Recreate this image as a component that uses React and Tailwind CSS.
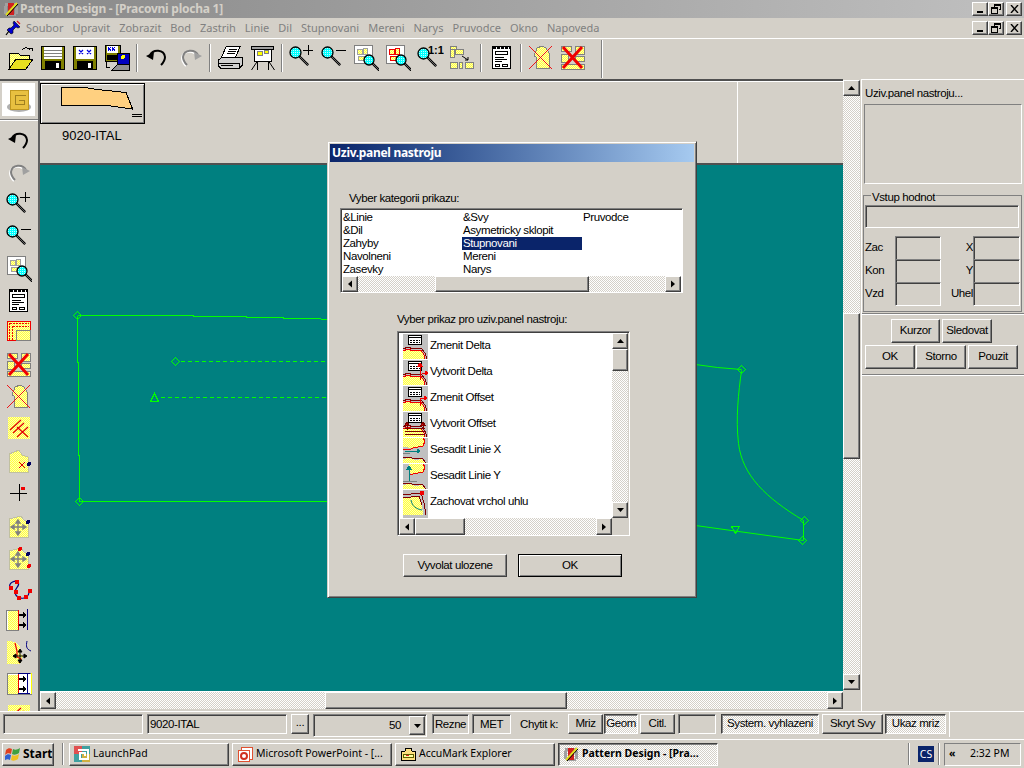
import React from 'react';

const raised = 'border border-t-white border-l-white border-r-[#404040] border-b-[#404040] shadow-[inset_-1px_-1px_0_#808080] bg-[#d4d0c8]';
const sunken = 'border border-t-[#808080] border-l-[#808080] border-r-white border-b-white shadow-[inset_1px_1px_0_#404040]';
const pressed = 'border border-t-[#404040] border-l-[#404040] border-r-white border-b-white shadow-[inset_1px_1px_0_#808080] bg-[repeating-conic-gradient(#d4d0c8_0_25%,#ffffff_0_50%)] bg-[length:2px_2px]';
const track = 'bg-[repeating-conic-gradient(#d4d0c8_0_25%,#ffffff_0_50%)] bg-[length:2px_2px]';
const tahoma = "font-['Noto_Sans',sans-serif]";
const small = 'text-[11.5px] tracking-[-0.4px]';

const MENU = ['Soubor', 'Upravit', 'Zobrazit', 'Bod', 'Zastrih', 'Linie', 'Dil', 'Stupnovani', 'Mereni', 'Narys', 'Pruvodce', 'Okno', 'Napoveda'];

const Svg = ({ children, w = 26, h = 26 }) => (
  <svg width={w} height={h} viewBox="0 0 26 26" shapeRendering="crispEdges">{children}</svg>
);

// dither: pale yellow checker, kept as a 4x4 tile so it survives rasterising
const Patterns = () => (
  <svg width="0" height="0" className="absolute">
    <defs>
      <pattern id="yd" width="4" height="4" patternUnits="userSpaceOnUse">
        <rect width="4" height="4" fill="#ffffb0" shapeRendering="crispEdges" />
        <path d="M0 0h1v1H0zM2 0h1v1H2zM1 1h1v1H1zM3 1h1v1H3zM0 2h1v1H0zM2 2h1v1H2zM1 3h1v1H1zM3 3h1v1H3z" fill="#ffff40" shapeRendering="crispEdges" />
      </pattern>
      <pattern id="cd" width="2" height="2" patternUnits="userSpaceOnUse">
        <rect width="2" height="2" fill="#00ffff" />
        <rect width="1" height="1" fill="#c0ffff" />
      </pattern>
    </defs>
  </svg>
);

const Folder = () => (
  <Svg>
    <path d="M1 8h9l2 2h9v4H8L1 24z" fill="url(#yd)" stroke="#000" />
    <path d="M1 24l7-10h17l-7 10z" fill="#e8e020" stroke="#000" />
    <path d="M14 5c3-3 6-3 8 0" fill="none" stroke="#000" />
    <path d="M20 3h4v3" fill="none" stroke="#000" />
  </Svg>
);

const Disk = ({ marks }) => (
  <svg width="24" height="24" viewBox="0 0 24 24" shapeRendering="crispEdges">
    <rect x="0.5" y="0.5" width="23" height="23" fill="#808000" stroke="#000" />
    <rect x="3" y="1" width="18" height="12" fill="#fff" />
    {marks ? (
      <path d="M6 4l4 4m0-4l-4 4M14 4l4 4m0-4l-4 4" stroke="#0000e0" fill="none" strokeWidth="1.2" shapeRendering="auto" />
    ) : (
      <path d="M3 4h18M3 7h18M3 10h18" stroke="#808080" />
    )}
    <rect x="4" y="15" width="16" height="8" fill="#000" />
    <rect x="15" y="17" width="3" height="5" fill="#fff" />
  </svg>
);

const SaveAll = () => (
  <Svg>
    <rect x="1" y="0" width="15" height="16" fill="#808000" stroke="#000" />
    <rect x="3" y="1" width="11" height="7" fill="#fff" />
    <path d="M4 2l3 4m0-4l-3 4M8 2l3 4m0-4l-3 4" stroke="#0000e0" />
    <rect x="3" y="10" width="11" height="5" fill="#000" />
    <rect x="13" y="8" width="12" height="17" fill="#0000c0" stroke="#000" />
    <circle cx="19" cy="12" r="2" fill="#ffff00" />
    <path d="M8 25l6-6h11v6z" fill="#909090" stroke="#000" />
    <path d="M2 17v5h4" fill="none" stroke="#000" />
  </Svg>
);

const Undo = ({ flip, gray }) => (
  <svg width="24" height="24" viewBox="0 0 24 24" className={flip ? '-scale-x-100' : ''}>
    {gray && <path d="M6 10C9 4 20 4 21 12c0 4-2 6-4 8" fill="none" stroke="#fff" strokeWidth="2" />}
    <path d="M5 9C8 3 19 3 20 11c0 4-2 6-4 8" fill="none" stroke={gray ? '#808080' : '#000'} strokeWidth="2" />
    <path d="M1 10l8-4-1 8z" fill={gray ? '#a0a0a0' : '#000'} />
  </svg>
);

const Printer = () => (
  <Svg w={27}>
    <path d="M9 1h14l-5 11H4z" fill="#fff" stroke="#000" />
    <path d="M11 4h8M10 6h8M9 8h8" stroke="#000" />
    <path d="M1 15l4-3h20v8l-3 3H3l-2-2z" fill="#d0d0d0" stroke="#000" />
    <path d="M1 18h21v5" fill="none" stroke="#000" />
    <rect x="3" y="20" width="12" height="1" fill="#000" />
  </Svg>
);

const Plotter = () => (
  <Svg w={27}>
    <rect x="2" y="1" width="22" height="3" fill="#a0a0a0" stroke="#000" />
    <rect x="5" y="4" width="17" height="12" fill="#fff" stroke="#000" />
    <rect x="8" y="6" width="5" height="4" fill="#ffff00" stroke="#808080" />
    <rect x="15" y="5" width="4" height="3" fill="#ffff00" stroke="#808080" />
    <path d="M8 16L2 25M19 16l6 9M8 16v9M19 16v9" stroke="#000" fill="none" shapeRendering="auto" />
  </Svg>
);

const Lens = ({ x = 0, y = 0, r = 5.5 }) => (
  <g transform={`translate(${x} ${y})`} shapeRendering="auto">
    <path d={`M${r + 1} ${r + 1}l${r * 2.3} ${r * 2.3}`} stroke="#000" strokeWidth="2.4" />
    <path d={`M${r + 1} ${r + 1}l${r * 2.3} ${r * 2.3}`} stroke="#808080" strokeWidth="0.8" />
    <circle cx={r + 1} cy={r + 1} r={r} fill="url(#cd)" stroke="#000" strokeWidth="1.3" />
  </g>
);

const Zoom = ({ minus }) => (
  <Svg>
    <Lens x={0} y={1} />
    <path d={minus ? 'M15 5h10' : 'M14 5h10M19 0v10'} stroke="#000" />
  </Svg>
);

const ZoomFit = ({ red }) => (
  <Svg>
    <rect x="1" y="0" width="18" height="18" fill="#fff" stroke="#808080" />
    <path d="M4 4h5v5H4zM10 3h4v6h-4zM5 11h6v4H5z" fill="url(#yd)" stroke={red ? '#f00000' : '#a0a0a0'} />
    <Lens x={10} y={9} r={5} />
  </Svg>
);

const Zoom11 = () => (
  <Svg w={28}>
    <Lens x={0} y={2} />
    <text x="11" y="9" fontSize="11" fontWeight="700" fontFamily="Liberation Sans, sans-serif">1:1</text>
  </Svg>
);

const Arrange = () => (
  <Svg>
    <path d="M1 1h6v3H1zM1 4h4v8H1zM6 4h8v5H6z" fill="url(#yd)" stroke="#808080" />
    <rect x="1" y="17" width="7" height="6" fill="url(#yd)" stroke="#808080" />
    <rect x="10" y="17" width="3" height="6" fill="url(#yd)" stroke="#808080" />
    <rect x="16" y="17" width="8" height="6" fill="url(#yd)" stroke="#808080" />
    <path d="M13 11l6 4m0-3v3h-3" stroke="#000" fill="none" shapeRendering="auto" />
  </Svg>
);

const Page = () => (
  <svg width="20" height="24" viewBox="0 0 20 24" shapeRendering="crispEdges">
    <rect x="0.5" y="0.5" width="18" height="22" fill="#fff" stroke="#000" strokeWidth="1" />
    <path d="M1 2h17" stroke="#000" strokeWidth="2" strokeDasharray="3 1" />
    <rect x="3.5" y="5.5" width="12" height="3" fill="#fff" stroke="#000" />
    <path d="M3 11h9M3 13h12M3 15h7" stroke="#000" />
    <rect x="3.5" y="18.5" width="4" height="2" fill="#fff" stroke="#000" />
    <rect x="10.5" y="18.5" width="5" height="2" fill="#fff" stroke="#000" />
  </svg>
);

const XPiece = () => (
  <Svg>
    <path d="M9 3l5-2 4 2 3 5v15H8V12l-2-1z" fill="url(#yd)" stroke="#808080" />
    <path d="M1 1l23 23M24 1L1 24" stroke="#f00000" strokeWidth="0.9" shapeRendering="auto" />
  </Svg>
);

const XGrid = () => (
  <Svg>
    <rect x="1" y="1" width="10" height="5" fill="url(#yd)" stroke="#808080" />
    <rect x="15" y="1" width="9" height="8" fill="url(#yd)" stroke="#808080" />
    <rect x="1" y="9" width="7" height="8" fill="url(#yd)" stroke="#808080" />
    <rect x="15" y="11" width="9" height="5" fill="url(#yd)" stroke="#808080" />
    <rect x="1" y="19" width="23" height="5" fill="url(#yd)" stroke="#808080" />
    <path d="M3 2l19 21M22 2L3 23" stroke="#f00000" strokeWidth="3" shapeRendering="auto" />
  </Svg>
);

const RedGrid = () => (
  <Svg>
    <rect x="1" y="1" width="23" height="19" fill="url(#yd)" stroke="#f00000" />
    <path d="M3 20V3h20M6 20V6h17" fill="none" stroke="#f00000" strokeDasharray="2 1" />
    <rect x="10" y="10" width="14" height="10" fill="url(#yd)" stroke="#808080" />
  </Svg>
);

const SlashX = () => (
  <Svg>
    <rect x="2" y="1" width="22" height="22" fill="url(#yd)" />
    <path d="M4 14L15 4M7 17L18 7M11 21l11-10M11 11l11 10" stroke="#e00000" strokeWidth="1.2" shapeRendering="auto" />
  </Svg>
);

const NotchX = () => (
  <Svg>
    <path d="M3 6l10-4 3 5 6 2v15H3z" fill="url(#yd)" stroke="#c0c0a0" />
    <path d="M13 14l6 6m0-6l-6 6" stroke="#e00000" shapeRendering="auto" />
    <circle cx="23" cy="16" r="2" fill="#000060" />
  </Svg>
);

const Cross = () => (
  <Svg>
    <path d="M4 13h17M13 4v17" stroke="#000" />
    <rect x="15" y="7" width="4" height="3" fill="#f00000" />
  </Svg>
);

const Move = ({ red }) => (
  <Svg>
    <path d="M3 7l12-3 3 4 4 2v15H3z" fill="url(#yd)" stroke="#c0c0a0" />
    <path d="M12 9v13M6 15h13M12 8l-2 3h4zM12 23l-2-3h4zM5 15l3-2v4zM20 15l-3-2v4z" stroke="#808080" fill="#808080" strokeWidth="1.4" shapeRendering="auto" />
    <circle cx="22" cy="10" r="2" fill="#000060" />
    {red && <circle cx="14" cy="5" r="2" fill="#f00000" />}
    {red && <circle cx="23" cy="22" r="2" fill="#f00000" />}
  </Svg>
);

const Curve = () => (
  <Svg>
    <path d="M4 12c-2-6 6-8 8-6 3 4-4 6-3 11 1 4 5 6 9 5 4-1 6-5 5-8" fill="none" stroke="#000080" strokeWidth="1.2" shapeRendering="auto" />
    <rect x="3" y="10" width="4" height="4" fill="#f00000" />
    <rect x="9" y="4" width="4" height="4" fill="#f00000" />
    <rect x="8" y="14" width="4" height="4" fill="#f00000" />
    <rect x="11" y="20" width="4" height="4" fill="#f00000" />
    <rect x="18" y="19" width="4" height="4" fill="#f00000" />
    <rect x="22" y="13" width="4" height="4" fill="#f00000" />
  </Svg>
);

const ShiftA = ({ framed }) => (
  <Svg>
    {framed ? (
      <path d="M1 1h24v21H1z" fill="#fff" stroke="#808080" />
    ) : (
      <rect x="0.5" y="2" width="12" height="20" fill="#fff" stroke="#808080" />
    )}
    <rect x="2" y="3" width="11" height="19" fill="url(#yd)" />
    <path d="M12 2v20" stroke="#f00000" />
    <path d="M21 1v21" stroke="#000080" />
    {framed && <path d="M12 1.5h12M12 21.5h12" stroke="#000080" />}
    {framed && <path d="M25 1v21" stroke="#ffff00" />}
    <path d="M13 7h6M13 17h6" stroke="#000" strokeWidth="1.4" />
    <path d="M20 7l-3-3v6zM20 17l-3-3v6z" fill="#000" />
  </Svg>
);

const ShiftB = () => (
  <Svg>
    <path d="M1 1l9 1 4 5v7l3 2-3 8H1z" fill="url(#yd)" />
    <path d="M9 3l2 8v6l4 2-2 4" fill="none" stroke="#f00000" strokeWidth="1.2" shapeRendering="auto" />
    <path d="M14 10v12M8 16h12M14 9l-2 3h4zM14 23l-2-3h4zM7 16l3-2v4zM21 16l-3-2v4z" stroke="#000" fill="#000" shapeRendering="auto" />
    <path d="M21 1c-1 5-1 8 4 10" fill="none" stroke="#000080" shapeRendering="auto" />
  </Svg>
);

// ikony ve spodnim seznamu dialogu
const GradeIcon = ({ kind }) => {
  const table = (
    <g>
      <rect x="5.5" y="1.5" width="13" height="9" fill="#fff" stroke="#000" />
      <path d="M6 3.5h12" stroke="#000" />
      <path d="M7 6h10M7 8h10" stroke="#000" strokeDasharray="2 1" />
    </g>
  );
  const seam = (
    <g>
      <path d="M0 17l5-2 5 2 8-1 4 6v3H0z" fill="url(#yd)" />
      <path d="M0 15l5-2 5 2 8-1 4 5 2 6" fill="none" stroke="#800000" />
      <path d="M0 17l5-2 5 2 8-1 3 5 1 4" fill="none" stroke="#f00000" />
    </g>
  );
  return (
    <svg width="25" height="25" viewBox="0 0 25 25" shapeRendering="crispEdges" className="shrink-0">
      <rect width="25" height="25" fill="#c0c0c0" />
      {kind < 4 && seam}
      {kind < 4 && table}
      {kind === 1 && <path d="M17 4v16M15 6l2-3 2 3zM19 13h5M22 11l3 2-3 2z" stroke="#f00000" fill="#f00000" />}
      {kind === 2 && <path d="M17 12h5M21 10l3 2-3 2zM17 12v8" stroke="#f00000" fill="#f00000" />}
      {kind === 3 && <path d="M2 16h20M2 19h20M2 22h20M4 12v6M20 12v6M2 13l2-3 2 3zM18 13l2-3 2 3z" stroke="#800000" fill="#f00000" />}
      {kind === 4 && (
        <g>
          <path d="M0 0h20l2 3-2 5-10 2-10-1z" fill="url(#yd)" />
          <path d="M20 0l2 3-2 5-10 2-4 2-6-1" fill="none" stroke="#f00000" />
          <path d="M0 15l7 1" stroke="#808080" />
          <path d="M2 13h14M14 11l3 2-3 2z" stroke="#008080" fill="#008080" />
          <path d="M0 21l6-1 6 2 7-1 3 4H0z" fill="url(#yd)" />
          <path d="M0 20l6-1 6 2 7-1 4 5" fill="none" stroke="#800000" />
        </g>
      )}
      {kind === 5 && (
        <g>
          <path d="M6 0h14l2 3-2 5-10 2-4-1z" fill="url(#yd)" />
          <path d="M20 0l2 3-2 5-10 2-4 0" fill="none" stroke="#f00000" />
          <path d="M0 17h14" stroke="#808080" />
          <path d="M6 3v14M4 5l2-3 2 3z" stroke="#008080" fill="#008080" />
          <path d="M0 21l6-1 6 2 7-1 3 4H0z" fill="url(#yd)" />
          <path d="M0 20l6-1 6 2 7-1 4 5" fill="none" stroke="#800000" />
        </g>
      )}
      {kind === 6 && (
        <g>
          <path d="M0 8l6-1 10-1 3 8 1 11H0z" fill="url(#yd)" />
          <path d="M0 5l8-1 10-1 3 10 2 12M0 8l8-1 8-1 3 9" fill="none" stroke="#800000" />
          <path d="M8 10c1 6 5 9 11 10" fill="none" stroke="#008080" shapeRendering="auto" />
          <rect x="17" y="1" width="4" height="4" fill="#f00000" />
        </g>
      )}
    </svg>
  );
};

const Flag = () => (
  <svg width="16" height="15" viewBox="0 0 16 15">
    <path d="M1 3c2-2 4-2 6-1L6 7C4 6 2 6 0 8z" fill="#e04020" />
    <path d="M8 2c2 1 4 1 7-1l-1 5c-3 2-5 2-7 1z" fill="#40a040" />
    <path d="M0 9c2-2 4-2 6-1l-1 5c-2-1-4-1-6 1z" fill="#3060d0" />
    <path d="M7 8c2 1 4 1 7-1l-1 5c-3 2-5 2-7 1z" fill="#f0c020" />
  </svg>
);

const AppIcon = () => (
  <svg width="16" height="16" viewBox="0 0 16 16" shapeRendering="crispEdges">
    <path d="M2 2h11v3H2zM1 5h3v8H1zM12 5h3v8h-3zM3 13h10v2H3z" fill="#a0a0a0" />
    <rect x="5" y="2" width="6" height="12" fill="#d02020" />
    <path d="M3 14L14 2" stroke="#e0e020" strokeWidth="2" shapeRendering="auto" />
    <path d="M4 15L15 3" stroke="#000" shapeRendering="auto" />
  </svg>
);

const Pin = () => (
  <svg width="16" height="16" viewBox="0 0 16 16">
    <path d="M9 1l6 6-2 1-2-1-3 3 0 3-2 1-4-4 2-2h2l3-3-1-2z" fill="#0000d0" stroke="#000" strokeWidth="0.6" />
    <path d="M4 11l-3 4" stroke="#000" strokeWidth="1.2" />
    <path d="M12 1l3 3" stroke="#e02020" strokeWidth="1.2" />
  </svg>
);

const Tri = ({ dir }) => {
  const d = { up: 'M1 6l3.5-4 3.5 4z', down: 'M1 2l3.5 4 3.5-4z', left: 'M6 0.5l-4 3.5 4 3.5z', right: 'M2 0.5l4 3.5-4 3.5z' }[dir];
  return <svg width="9" height="8" viewBox="0 0 9 8"><path d={d} fill="#000" /></svg>;
};

const SB = ({ dir, className = '' }) => (
  <div className={`${raised} flex items-center justify-center shrink-0 ${className}`}><Tri dir={dir} /></div>
);

const WinBtns = () => (
  <div className="ml-auto flex mr-[2px]">
    <div className={`${raised} w-[16px] h-[14px] relative`}><div className="absolute left-[4px] bottom-[2px] w-[6px] h-[2px] bg-black" /></div>
    <div className={`${raised} w-[16px] h-[14px] flex items-center justify-center`}>
      <svg width="10" height="10" viewBox="0 0 10 10" shapeRendering="crispEdges"><path d="M3 .5h6.5v5H8M3 1.5h6M3 .5V3" fill="none" stroke="#000" /><rect x="0.5" y="3.5" width="6" height="5.5" fill="none" stroke="#000" /><path d="M1 4.5h5" stroke="#000" /></svg>
    </div>
    <div className={`${raised} w-[16px] h-[14px] ml-[2px] flex items-center justify-center`}>
      <svg width="9" height="8" viewBox="0 0 9 8"><path d="M1 0l7 8M8 0L1 8" stroke="#000" strokeWidth="1.4" /></svg>
    </div>
  </div>
);

const Btn = ({ children, w, h = 24, cls = raised, className = '' }) => (
  <div style={{ width: w, height: h }} className={`${cls} flex items-center justify-center shrink-0 whitespace-nowrap ${className}`}>{children}</div>
);

const Sep = ({ className = '' }) => <div className={`w-[2px] h-[28px] bg-[#808080] border-r border-white shrink-0 ${className}`} />;

const Cell = ({ children, className = '' }) => <div className={`w-[32px] h-[28px] flex items-center justify-center shrink-0 ${className}`}>{children}</div>;

const Toolbar = () => (
  <div className="h-[40px] flex items-center pl-[5px] pb-[3px]">
    <Cell><Folder /></Cell>
    <Cell><Disk /></Cell>
    <Cell><Disk marks /></Cell>
    <Cell><SaveAll /></Cell>
    <Sep className="ml-[3px] mr-[3px]" />
    <Cell><Undo /></Cell>
    <Cell className="ml-[2px]"><Undo flip gray /></Cell>
    <Sep className="ml-[2px] mr-[2px]" />
    <Cell className="ml-[1px]"><Printer /></Cell>
    <Cell><Plotter /></Cell>
    <Sep className="ml-[3px] mr-[3px]" />
    <Cell><Zoom /></Cell>
    <Cell><Zoom minus /></Cell>
    <Cell><ZoomFit /></Cell>
    <Cell><ZoomFit red /></Cell>
    <Cell><Zoom11 /></Cell>
    <Cell><Arrange /></Cell>
    <Sep className="ml-[2px] mr-[3px]" />
    <Cell className="ml-[1px]"><Page /></Cell>
    <Sep className="ml-[2px]" />
    <Cell className="ml-[3px]"><XPiece /></Cell>
    <Cell><XGrid /></Cell>
    <div className="w-[2px] h-[38px] bg-[#808080] border-r border-white ml-[12px] mt-[3px]" />
  </div>
);

const LEFT_TOOLS = [
  <Undo key="a" />, <Undo key="b" flip gray />, <Zoom key="c" />, <Zoom key="d" minus />, <ZoomFit key="e" />, <Page key="f" />,
  <RedGrid key="g" />, <XGrid key="h" />, <XPiece key="i" />, <SlashX key="j" />, <NotchX key="k" />, <Cross key="l" />,
  <Move key="m" />, <Move key="n" red />, <Curve key="o" />, <ShiftA key="p" />, <ShiftB key="q" />, <ShiftA key="r" framed />, <SlashX key="s" />,
];

const LeftBar = () => (
  <div className="w-[40px] shrink-0 border-r-2 border-[#606060] overflow-hidden">
    <div className="mt-[2px] ml-[2px] w-[33px] h-[33px] bg-white flex items-center justify-center">
      <svg width="24" height="26" viewBox="0 0 24 26" shapeRendering="crispEdges">
        <ellipse cx="12" cy="20" rx="12" ry="5" fill="#b0b0b0" shapeRendering="auto" />
        <rect x="3" y="3" width="18" height="19" fill="#e8c040" stroke="#c09820" />
        <path d="M19 8H8v9h9v-4h-5" fill="none" stroke="#a08020" />
      </svg>
    </div>
    <div className="h-[2px] mt-[3px] bg-[#808080] border-b border-white" />
    <div className="mt-[4px]">
      {LEFT_TOOLS.map((t, i) => (
        <div key={i} className="h-[32px] flex items-center justify-center">{t}</div>
      ))}
    </div>
  </div>
);

const Diamond = ({ x, y }) => <path d={`M${x} ${y - 4}l4 4-4 4-4-4z`} fill="none" stroke="#00ff00" />;

const PatternView = () => (
  <svg viewBox="40 165 803 526" className="block w-full h-full" fill="none" stroke="#00ff00" shapeRendering="crispEdges">
    <g transform="translate(0.5 0.5)">
      <polyline points="77,315 193,315 193,316 246,316 246,317 283,317 283,318 310,318 330,319" />
      <polyline points="77,315 77,362 78,362 78,455 79,455 79,501 330,501" />
      <Diamond x={77} y={315} />
      <Diamond x={79} y={501} />
      <Diamond x={175} y={361} />
      <path d="M180 361h147" strokeDasharray="4 3" />
      <path d="M154 393l4 8h-8z" />
      <path d="M160 397h168" strokeDasharray="4 3" />
      <g shapeRendering="auto">
        <polyline points="695,364 717,367 741,369" />
        <path d="M741 370C738 392 735 418 738 443C742 475 765 497 803 520" />
        <polyline points="803,520 803,540 695,525" />
      </g>
      <Diamond x={741} y={369} />
      <Diamond x={804} y={520} />
      <Diamond x={802} y={540} />
      <path d="M731 526h8l-4 7z" />
    </g>
  </svg>
);

const Center = () => (
  <div className="flex-1 flex flex-col min-w-0">
    <div className="h-[82px] flex shrink-0 border-t border-white">
      <div className="w-[697px] shrink-0">
        <div className="w-[105px] h-[41px] mt-[1px] border border-black bg-[#d4d0c8] shadow-[inset_1px_1px_0_#fff,inset_-1px_-1px_0_#808080]">
          <svg width="103" height="39" viewBox="0 0 103 39" shapeRendering="crispEdges">
            <path d="M20 3.5h24l12 2 29 3 6 15v1.5l-21-3-50-1z" fill="#ffd080" stroke="#000" />
            <path d="M91 30h10M91 32h10" stroke="#000" />
          </svg>
        </div>
        <div className="text-[13px] ml-[22px] mt-[4px] text-black leading-[16px]">9020-ITAL</div>
      </div>
      <div className="w-px bg-white" />
    </div>
    <div className="h-[528px] shrink-0 border-t-2 border-[#505050] bg-[#008080]">
      <PatternView />
    </div>
    <div className="h-[18px] flex shrink-0 mb-[2px] border-t border-white">
      <SB dir="left" className="w-[16px] h-[17px]" />
      <div className={`w-[269px] h-[17px] ${track}`} />
      <div className={`${raised} w-[242px] h-[17px]`} />
      <div className={`flex-1 h-[17px] ${track}`} />
      <SB dir="right" className="w-[16px] h-[17px]" />
    </div>
  </div>
);

const VScroll = () => (
  <div className="w-[18px] shrink-0 flex flex-col pb-[21px] pt-px">
    <SB dir="up" className="h-[16px] w-[17px]" />
    <div className={`h-[217px] w-[17px] ${track}`} />
    <div className={`${raised} h-[146px] w-[17px]`} />
    <div className={`flex-1 w-[17px] ${track}`} />
    <SB dir="down" className="h-[16px] w-[17px]" />
  </div>
);

const Field = ({ w }) => <div style={{ width: w }} className={`${sunken} h-[24px] shrink-0`} />;

const RightPanel = () => (
  <div className={`flex-1 border-t border-l border-white pt-[6px] text-black ${small}`}>
    <div className="pl-[3px] leading-[15px] h-[18px]">Uziv.panel nastroju...</div>
    <div className="ml-[2px] w-[158px] h-[80px] border border-t-[#808080] border-l-[#808080] border-r-white border-b-white" />
    <div className="relative ml-[1px] mt-[11px] w-[159px] h-[117px] border border-[#808080] pt-[9px] px-[1px]">
      <div className="absolute left-[7px] -top-[6px] bg-[#d4d0c8] px-[1px] leading-[14px]">Vstup hodnot</div>
      <div className={`${sunken} h-[23px] w-[154px]`} />
      <div className="mt-[8px] flex flex-col">
        {[['Zac', 'X'], ['Kon', 'Y'], ['Vzd', 'Uhel']].map(([a, b]) => (
          <div key={a} className="flex items-center h-[24px] -mt-px first:mt-0">
            <span className="w-[30px] shrink-0 leading-none">{a}</span>
            <Field w={46} />
            <span className="w-[32px] text-right shrink-0 leading-none">{b}</span>
            <Field w={47} />
          </div>
        ))}
      </div>
    </div>
    <div className="mt-[1px] h-[2px] bg-[#808080] border-b border-white" />
    <div className="flex ml-[29px] mt-[4px] gap-[2px]">
      <Btn w={49}>Kurzor</Btn>
      <Btn w={50}>Sledovat</Btn>
    </div>
    <div className="flex ml-[3px] mt-[2px] gap-[1px]">
      <Btn w={50}>OK</Btn>
      <Btn w={50}>Storno</Btn>
      <Btn w={50} className="ml-[1px]">Pouzit</Btn>
    </div>
    <div className="mt-[5px] h-[2px] bg-[#808080] border-b border-white" />
  </div>
);

const StatusBar = () => (
  <div className={`h-[28px] shrink-0 border-t border-white flex items-start pt-[2px] pl-[3px] ${small}`}>
    <div className={`${sunken} w-[140px] h-[20px]`} />
    <div className={`${sunken} w-[140px] h-[20px] ml-[4px] pl-[2px] leading-[18px]`}>9020-ITAL</div>
    <Btn w={18} h={20} className="ml-[4px] pb-[3px]">...</Btn>
    <div className={`${sunken} w-[114px] h-[23px] ml-[4px] flex items-center justify-end pr-[1px]`}>
      <span className="mr-[8px]">50</span>
      <SB dir="down" className="w-[16px] h-[19px]" />
    </div>
    <div className={`${sunken} w-[37px] h-[20px] ml-[5px] text-center leading-[18px]`}>Rezne</div>
    <div className={`${sunken} w-[39px] h-[20px] ml-[3px] text-center leading-[18px]`}>MET</div>
    <div className="w-[48px] ml-[9px] leading-[20px] whitespace-nowrap">Chytit k:</div>
    <Btn w={35} h={20}>Mriz</Btn>
    <Btn w={34} h={20} cls={pressed} className="ml-[1px]">Geom</Btn>
    <Btn w={35} h={20} className="ml-[2px]">Citl.</Btn>
    <div className={`${sunken} w-[38px] h-[20px] ml-[3px]`} />
    <Btn w={98} h={20} cls={pressed} className="ml-[5px]">System. vyhlazeni</Btn>
    <Btn w={61} h={20} className="ml-[3px]">Skryt Svy</Btn>
    <Btn w={61} h={20} cls={pressed} className="ml-[2px]">Ukaz mriz</Btn>
    <div className="w-[1px] h-[25px] bg-white ml-[3px] -mt-[2px]" />
  </div>
);

const Task = ({ icon, label, active }) => (
  <div className={`w-[160px] h-[23px] shrink-0 flex items-center pl-[4px] gap-[3px] overflow-hidden whitespace-nowrap ${active ? `${pressed} font-bold` : raised}`}>
    {icon}
    <span>{label}</span>
  </div>
);

const Taskbar = () => (
  <div className={`h-[29px] shrink-0 border-t border-white flex items-center pl-[2px] text-[10.5px] ${tahoma}`}>
    <div className={`${raised} w-[52px] h-[23px] flex items-center pl-[2px] gap-[2px] font-bold text-[12px]`}><Flag />Start</div>
    <div className="w-[2px] h-[22px] bg-[#808080] border-r border-white ml-[8px] mr-[5px]" />
    <div className="flex gap-[3px]">
      <Task label="LaunchPad" icon={
        <svg width="16" height="16" viewBox="0 0 16 16" shapeRendering="crispEdges"><rect width="16" height="16" fill="#40a0a0" /><rect width="8" height="8" fill="#e05050" /><rect x="8" y="8" width="8" height="8" fill="#d0b040" /><path d="M4 4h10v9H6V7h5v3" fill="none" stroke="#fff" strokeWidth="2" /></svg>
      } />
      <Task label="Microsoft PowerPoint - [..." icon={
        <svg width="16" height="16" viewBox="0 0 16 16" shapeRendering="crispEdges"><path d="M4 1h11v12H4z" fill="#fff" stroke="#e05030" /><path d="M1 4h11v11H1z" fill="#fff" stroke="#e05030" /><circle cx="7" cy="10" r="3" fill="none" stroke="#d03020" strokeWidth="2" shapeRendering="auto" /></svg>
      } />
      <Task label="AccuMark Explorer" icon={
        <svg width="16" height="16" viewBox="0 0 16 16" shapeRendering="crispEdges"><path d="M1 5h4l1-3h5l1 3h3v9H1z" fill="#ffe080" stroke="#000" /><path d="M3 8h10v3H3z" fill="#ffffa0" stroke="#606000" /><rect x="6" y="9" width="3" height="1" fill="#e02020" /></svg>
      } />
      <Task label="Pattern Design - [Pra..." active icon={<AppIcon />} />
    </div>
    <div className="w-[2px] h-[22px] bg-[#808080] border-r border-white ml-[190px]" />
    <div className="w-[16px] h-[16px] ml-[8px] bg-[#0a246a] text-white text-center leading-[16px]">CS</div>
    <div className="w-[2px] h-[22px] bg-[#808080] border-r border-white ml-[4px]" />
    <div className="ml-[4px] w-[77px] h-[23px] border border-t-[#808080] border-l-[#808080] border-r-white border-b-white flex items-center pl-[4px]">
      <span className="font-bold w-[21px]">«</span>
      <span>2:32 PM</span>
    </div>
  </div>
);

const CAT_ROWS = [
  ['&Linie', '&Svy', 'Pruvodce'],
  ['&Dil', 'Asymetricky sklopit', ''],
  ['Zahyby', 'Stupnovani', ''],
  ['Navolneni', 'Mereni', ''],
  ['Zasevky', 'Narys', ''],
];

const COMMANDS = ['Zmenit Delta', 'Vytvorit Delta', 'Zmenit Offset', 'Vytvorit Offset', 'Sesadit Linie X', 'Sesadit Linie Y', 'Zachovat vrchol uhlu'];

const Dialog = () => (
  <div className={`absolute left-[327px] top-[141px] w-[370px] h-[457px] border border-t-[#d4d0c8] border-l-[#d4d0c8] border-r-[#404040] border-b-[#404040] shadow-[inset_1px_1px_0_#fff,inset_-1px_-1px_0_#808080] bg-[#d4d0c8] p-[2px] text-black ${small}`}>
    <div className={`h-[18px] bg-gradient-to-r from-[#0a246a] to-[#a6caf0] text-white font-bold text-[12px] tracking-[-0.3px] leading-[18px] pl-[2px] ${tahoma}`}>Uziv.panel nastroju</div>
    <div className="ml-[19px] mt-[29px] leading-[14px]">Vyber kategorii prikazu:</div>
    <div className={`${sunken} bg-white ml-[10px] mt-[3px] w-[343px] h-[85px] p-[1px] pl-px`}>
      <div className="h-[65px] overflow-hidden pt-px">
        {CAT_ROWS.map((row, i) => (
          <div key={i} className="flex h-[13px] leading-[13px]">
            {row.map((c, j) => (
              <div key={j} className={`w-[120px] shrink-0 pl-[1px] whitespace-nowrap ${i === 2 && j === 1 ? 'bg-[#0a246a] text-white' : ''}`}>{c}</div>
            ))}
          </div>
        ))}
      </div>
      <div className="flex h-[16px] mt-[1px]">
        <SB dir="left" className="w-[16px]" />
        <div className={`w-[77px] ${track}`} />
        <div className={`${raised} w-[154px]`} />
        <div className={`flex-1 ${track}`} />
        <SB dir="right" className="w-[16px]" />
      </div>
    </div>
    <div className="ml-[67px] mt-[19px] leading-[14px]">Vyber prikaz pro uziv.panel nastroju:</div>
    <div className={`${sunken} ml-[67px] mt-[5px] w-[233px] h-[205px] p-[1px] pr-[1px]`}>
      <div className="flex h-[185px]">
        <div className="flex-1 bg-white overflow-hidden pl-[4px]">
          {COMMANDS.map((c, i) => (
            <div key={c} className="flex items-center h-[26px] gap-[2px]">
              <GradeIcon kind={i} />
              <span className="whitespace-nowrap">{c}</span>
            </div>
          ))}
          <GradeIcon kind={7} />
        </div>
        <div className="w-[16px] flex flex-col">
          <SB dir="up" className="h-[16px]" />
          <div className={`${raised} h-[22px]`} />
          <div className={`flex-1 ${track}`} />
          <SB dir="down" className="h-[16px]" />
        </div>
      </div>
      <div className="flex h-[17px]">
        <SB dir="left" className="w-[16px]" />
        <div className={`${raised} w-[50px]`} />
        <div className={`w-[131px] ${track}`} />
        <SB dir="right" className="w-[16px]" />
        <div className="flex-1 bg-[#d4d0c8]" />
      </div>
    </div>
    <div className="flex ml-[73px] mt-[18px] gap-[11px]">
      <Btn w={104} h={23}>Vyvolat ulozene</Btn>
      <Btn w={104} h={23} cls="border border-black shadow-[inset_1px_1px_0_#fff,inset_-1px_-1px_0_#808080]">OK</Btn>
    </div>
  </div>
);

export default function App() {
  return (
    <div className="relative w-[1024px] h-[768px] overflow-hidden bg-[#d4d0c8] flex flex-col text-black font-['Liberation_Sans',sans-serif]">
      <Patterns />
      <div className={`h-[18px] shrink-0 flex items-center bg-gradient-to-r from-[#888888] to-[#c0c0c0] pl-[3px] ${tahoma}`}>
        <AppIcon />
        <span className="ml-[1px] text-[12px] tracking-[-0.25px] font-bold text-[#d4d0c8] whitespace-nowrap">Pattern Design - [Pracovni plocha 1]</span>
        <WinBtns />
      </div>
      <div className={`h-[21px] shrink-0 flex items-center border-b border-white pl-[5px] text-[11px] text-[#808080] ${tahoma}`}>
        <Pin />
        <div className="flex gap-[9px] ml-[5px]">
          {MENU.map(m => <span key={m}>{m}</span>)}
        </div>
        <WinBtns />
      </div>
      <Toolbar />
      <div className="h-[632px] shrink-0 flex">
        <div className="w-[843px] shrink-0 flex border-t-2 border-[#505050]">
          <LeftBar />
          <Center />
        </div>
        <VScroll />
        <RightPanel />
      </div>
      <StatusBar />
      <Taskbar />
      <Dialog />
    </div>
  );
}
